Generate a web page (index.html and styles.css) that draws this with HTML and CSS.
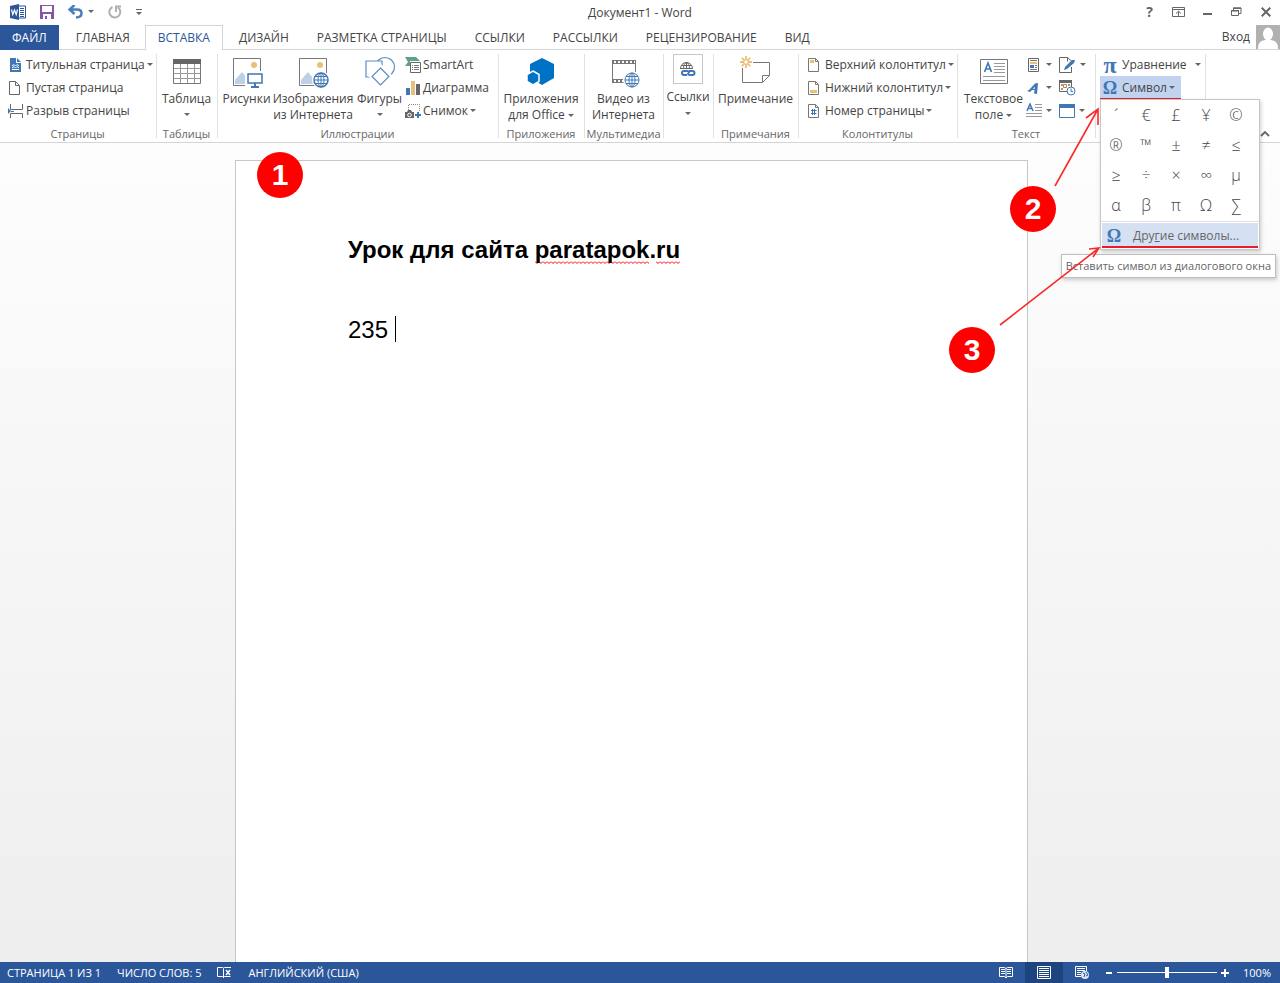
FILE: index.html
```html
<!DOCTYPE html>
<html lang="ru">
<head>
    <meta charset="UTF-8">
    <meta name="viewport" content="width=device-width, initial-scale=1.0">
    <title>Документ1 - Word</title>
    <link rel="stylesheet" href="styles.css">
</head>
<body>
    <!-- Title bar -->
    <header class="titlebar">
        <div class="quick-access">
            <button class="qa-btn" aria-label="Word">
                <svg width="16" height="16" viewBox="0 0 16 16"><path d="M8 2h7.500v12H8z" fill="#fff" stroke="#2b579a"/><path d="M10 4.500h4M10 6.500h4M10 8.500h4M10 10.500h4M10 12.500h4" stroke="#2b579a"/><path d="M0 2l9-2v16l-9-2z" fill="#2b579a"/><path d="M1.500 5.500l1.300 5L4.500 6l1.700 4.500 1.300-5" fill="none" stroke="#fff" stroke-width="1.200"/></svg>
            </button>
            <button class="qa-btn" aria-label="Сохранить">
                <svg width="14" height="14" viewBox="0 0 14 14"><path d="M0 0h14v14H0z" fill="#8653a8"/><path d="M2 1h10v6H2zM3 9h8v5H3z" fill="#fff"/><path d="M5 11h2v3H5z" fill="#8653a8"/></svg>
            </button>
            <button class="qa-btn qa-undo" aria-label="Отменить">
                <svg width="16" height="14" viewBox="0 0 16 14"><path d="M6.500 0L1.500 4.500l5 4.500M2 4.500H9c3 0 4.500 1.500 4.500 3.800S12 12.500 8 12.500" fill="none" stroke="#4a7ebb" stroke-width="2.500"/></svg>
                <span class="caret-down"></span>
            </button>
            <button class="qa-btn" aria-label="Повторить">
                <svg width="14" height="14" viewBox="0 0 14 14"><path d="M4.500 2A5.500 5.500 0 1 0 10 2.500" fill="none" stroke="#b0b0b0" stroke-width="2"/><path d="M8 7V1.500h5" fill="none" stroke="#b0b0b0" stroke-width="2"/></svg>
            </button>
            <button class="qa-btn" aria-label="Настройка панели">
                <svg width="6" height="6" viewBox="0 0 6 6"><path d="M0 0h6v1H0zM0 3h6L3 6z" fill="#666"/></svg>
            </button>
        </div>
        <div class="window-title">Документ1 - Word</div>
        <div class="window-buttons">
            <button aria-label="Справка" class="help-btn">?</button>
            <button aria-label="Параметры ленты"><svg width="13" height="10" viewBox="0 0 13 10"><path d="M.5.500h12v9H.5zM1 2.500h11" fill="none" stroke="#666"/><path d="M6.500 9V4.500M4 6.500l2.500-2.300L9 6.500" fill="none" stroke="#666"/></svg></button>
            <button aria-label="Свернуть"><svg width="10" height="10" viewBox="0 0 10 10"><path d="M0 6h9v2H0z" fill="#666"/></svg></button>
            <button aria-label="Восстановить"><svg width="11" height="10" viewBox="0 0 11 10"><path d="M.5 3.500h7v5h-7zM2.500 3V1h7.500v5.500H8" fill="none" stroke="#666"/><path d="M0 3h8v1.500H0zM2 .5h8V2H2z" fill="#666"/></svg></button>
            <button aria-label="Закрыть"><svg width="10" height="10" viewBox="0 0 10 10"><path d="M.7.700l8.600 8.600M9.300.700L.7 9.300" stroke="#666" stroke-width="2"/></svg></button>
        </div>
    </header>

    <!-- Tabs -->
    <nav class="tabs">
        <button class="tab tab-file">ФАЙЛ</button>
        <button class="tab">ГЛАВНАЯ</button>
        <button class="tab tab-active">ВСТАВКА</button>
        <button class="tab">ДИЗАЙН</button>
        <button class="tab">РАЗМЕТКА СТРАНИЦЫ</button>
        <button class="tab">ССЫЛКИ</button>
        <button class="tab">РАССЫЛКИ</button>
        <button class="tab">РЕЦЕНЗИРОВАНИЕ</button>
        <button class="tab">ВИД</button>
        <a class="sign-in" href="#">Вход
            <svg width="24" height="24" viewBox="0 0 24 24"><path d="M0 0h24v24H0z" fill="#b1b1b1"/><ellipse cx="12" cy="9" rx="5" ry="6.500" fill="#fff"/><path d="M2 24c0-6 2-8 7-9h6c5 1 7 3 7 9z" fill="#fff"/></svg>
        </a>
    </nav>

    <!-- Ribbon -->
    <div class="ribbon">
        <section class="group group-pages">
            <div class="group-body">
                <div class="rows">
                    <button class="row-btn">
                        <svg width="16" height="16" viewBox="0 0 16 16"><path d="M2 1h6v5h5v9H2z" fill="#3f78b5"/><path d="M9 1l4 4H9z" fill="#3f78b5"/><path d="M4 9l2-1.500 1.500 1.500L9 7.500 11 9M4 11l2-1.500 1.500 1.500L9 9.500l2 1.500M4 12.500h7" fill="none" stroke="#fff"/></svg>
                        Титульная страница<span class="caret-down"></span>
                    </button>
                    <button class="row-btn">
                        <svg width="16" height="16" viewBox="0 0 16 16"><path d="M1.500 1.500h6l4 4v9h-10zM7.500 1.500v4h4" fill="#fff" stroke="#666"/></svg>
                        Пустая страница
                    </button>
                    <button class="row-btn">
                        <svg width="16" height="16" viewBox="0 0 16 16"><path d="M2.500 1v5.500h12V1M2.500 15v-4.500h12V15" fill="none" stroke="#666"/><path d="M0 5l3 3-3 3z" fill="#3f78b5"/><path d="M3 8.500h3" stroke="#3f78b5"/></svg>
                        Разрыв страницы
                    </button>
                </div>
            </div>
            <h2 class="group-name">Страницы</h2>
        </section>

        <section class="group group-tables">
            <div class="group-body">
                <button class="big-btn">
                    <svg width="32" height="32" viewBox="0 0 32 32"><path d="M2.500 3.500h27v24h-27z" fill="#fff" stroke="#777"/><path d="M2 3h28v5H2z" fill="#666"/><path d="M3 12.500h26M3 17.500h26M3 22.500h26M9.500 8v19M16.500 8v19M23.500 8v19" stroke="#999"/></svg>
                    <span>Таблица</span><span class="caret-line"><i class="caret-down"></i></span>
                </button>
            </div>
            <h2 class="group-name">Таблицы</h2>
        </section>

        <section class="group group-art">
            <div class="group-body">
                <button class="big-btn btn-pictures">
                    <svg width="32" height="32" viewBox="0 0 32 32"><path d="M2.500 2.500h27v27h-27z" fill="#fff" stroke="#777"/><circle cx="23" cy="9" r="3" fill="#eac079"/><path d="M4 28V24l7-8 5 6v6z" fill="#bdd0e5"/><path d="M14 15h18v17H14z" fill="#fff"/><path d="M17 18h14v9H17z" fill="#fff" stroke="#3f78b5" stroke-width="1.500"/><path d="M24 27v3M20 31h8" stroke="#3f78b5" stroke-width="2"/></svg>
                    <span>Рисунки</span>
                </button>
                <button class="big-btn btn-online">
                    <svg width="32" height="32" viewBox="0 0 32 32"><path d="M2.500 2.500h27v27h-27z" fill="#fff" stroke="#777"/><circle cx="23" cy="9" r="3" fill="#eac079"/><path d="M4 28V24l7-8 5 6v6z" fill="#bdd0e5"/><circle cx="24" cy="24" r="9" fill="#fff"/><g fill="none" stroke="#3f78b5"><circle cx="24" cy="24" r="7" stroke-width="1.500"/><ellipse cx="24" cy="24" rx="3" ry="7"/><path d="M17 24h14M18 20.500h12M18 27.500h12M24 17v14"/></g></svg>
                    <span>Изображения<br>из Интернета</span>
                </button>
                <button class="big-btn btn-shapes">
                    <svg width="32" height="32" viewBox="0 0 32 32"><g fill="#fff" stroke="#5b8cc4" stroke-width="1.200"><circle cx="21" cy="11" r="9.500"/><path d="M2 5h16v16H2z"/><path d="M16.500 10.500l9.500 9.500-9.500 9.500L7 20z" stroke="#fff" stroke-width="4"/><path d="M16.500 12l8.500 8.500-8.500 8.500L8 20.500z"/></g></svg>
                    <span>Фигуры</span><span class="caret-line"><i class="caret-down"></i></span>
                </button>
                <div class="rows">
                    <button class="row-btn">
                        <svg width="16" height="16" viewBox="0 0 16 16"><path d="M0 0h11l4 4H5v5H0l3-4z" fill="#5fa088"/><path d="M5.500 5.500h10v10h-10z" fill="#fff" stroke="#666"/><path d="M7 8.500h1M9 8.500h5M7 10.500h1M9 10.500h5M7 12.500h1M9 12.500h5" stroke="#777"/></svg>
                        SmartArt
                    </button>
                    <button class="row-btn">
                        <svg width="16" height="16" viewBox="0 0 16 16"><path d="M1 8h4v7H1z" fill="#3f78b5"/><path d="M6 1h4v14H6z" fill="#eac079"/><path d="M11 4h4v11h-4z" fill="#666"/></svg>
                        Диаграмма
                    </button>
                    <button class="row-btn">
                        <svg width="16" height="16" viewBox="0 0 16 16"><path d="M3.500 7V1.500h11V9" fill="none" stroke="#888" stroke-dasharray="1 1"/><path d="M0 9h2l1-2h3l1 2h2v6H0z" fill="#666"/><circle cx="4.500" cy="12" r="1.800" fill="none" stroke="#fff"/><path d="M13 9v6M10 12h6" stroke="#3f78b5" stroke-width="2"/></svg>
                        Снимок<span class="caret-down"></span>
                    </button>
                </div>
            </div>
            <h2 class="group-name">Иллюстрации</h2>
        </section>

        <section class="group group-apps">
            <div class="group-body">
                <button class="big-btn">
                    <svg width="32" height="32" viewBox="0 0 32 32"><path d="M17 2l12 6v14l-12 7-12-7V8z" fill="#0072c6"/><path d="M8 15l6 3.500v7L8 29l-6-3.500v-7z" fill="#0072c6" stroke="#fff" stroke-width="1.500"/></svg>
                    <span>Приложения<br>для Office<i class="caret-down"></i></span>
                </button>
            </div>
            <h2 class="group-name">Приложения</h2>
        </section>

        <section class="group group-media">
            <div class="group-body">
                <button class="big-btn">
                    <svg width="32" height="32" viewBox="0 0 32 32"><path d="M4.500 4.500h23v22h-23z" fill="#fff" stroke="#777"/><path d="M4 4h24v4H4zM4 23h24v4H4z" fill="#777"/><path d="M6 6h21M6 25h21" stroke="#fff" stroke-width="2" stroke-dasharray="2 2"/><circle cx="24" cy="24" r="9" fill="#fff"/><g fill="none" stroke="#3f78b5"><circle cx="24" cy="24" r="7"/><ellipse cx="24" cy="24" rx="3" ry="7"/><path d="M17 24h14M18 20.500h12M18 27.500h12M24 17v14"/></g></svg>
                    <span>Видео из<br>Интернета</span>
                </button>
            </div>
            <h2 class="group-name">Мультимедиа</h2>
        </section>

        <section class="group group-links">
            <div class="group-body">
                <button class="big-btn btn-collapsed">
                    <span class="icon-frame"><svg width="18" height="18" viewBox="0 0 18 18"><g fill="none" stroke="#666"><path d="M1.500 8.500a6 6 0 0 1 12 0M7.500 2v7M3 5.500h9M1 8.500h13"/><path d="M4.500 9c0-4 1-6 3-6.500 2 .5 3 2.500 3 6.500"/></g><rect x="1" y="9" width="16" height="8" rx="4" fill="#fff"/><g fill="none" stroke="#3f78b5" stroke-width="2"><path d="M8 15H5a2 2 0 0 1 0-4h3a2 2 0 0 1 2 2M10 11h3.500a2 2 0 0 1 0 4H11a2 2 0 0 1-2-2"/></g></svg></span>
                    <span>Ссылки</span><span class="caret-line"><i class="caret-down"></i></span>
                </button>
            </div>
        </section>

        <section class="group group-comments">
            <div class="group-body">
                <button class="big-btn">
                    <svg width="32" height="32" viewBox="0 0 32 32"><path d="M3.500 12v14.500h20l7-7V6.500H14M23.500 26.500v-7h7" fill="none" stroke="#777"/><path d="M7 0v12M1 6h12M2.800 1.800l8.400 8.400M11.200 1.800l-8.400 8.400" stroke="#eac079" stroke-width="1.800"/><circle cx="7" cy="6" r="2.200" fill="#fff" stroke="#eac079"/></svg>
                    <span>Примечание</span>
                </button>
            </div>
            <h2 class="group-name">Примечания</h2>
        </section>

        <section class="group group-headers">
            <div class="group-body">
                <div class="rows">
                    <button class="row-btn">
                        <svg width="16" height="16" viewBox="0 0 16 16"><path d="M1.500 1.500h7l3 3v10h-10zM8.500 1.500v3h3" fill="#fff" stroke="#777"/><path d="M3 3h4v3H3z" fill="#eac079"/></svg>
                        Верхний колонтитул<span class="caret-down"></span>
                    </button>
                    <button class="row-btn">
                        <svg width="16" height="16" viewBox="0 0 16 16"><path d="M1.500 1.500h7l3 3v10h-10zM8.500 1.500v3h3" fill="#fff" stroke="#777"/><path d="M3 10h7v3H3z" fill="#eac079"/></svg>
                        Нижний колонтитул<span class="caret-down"></span>
                    </button>
                    <button class="row-btn">
                        <svg width="16" height="16" viewBox="0 0 16 16"><path d="M1.500 1.500h7l3 3v10h-10zM8.500 1.500v3h3" fill="#fff" stroke="#777"/><path d="M5.500 6v6M7.500 6v6M4 7.500h5.500M4 10.500h5.500" stroke="#3f78b5"/></svg>
                        Номер страницы<span class="caret-down"></span>
                    </button>
                </div>
            </div>
            <h2 class="group-name">Колонтитулы</h2>
        </section>

        <section class="group group-text">
            <div class="group-body">
                <button class="big-btn">
                    <svg width="32" height="32" viewBox="0 0 32 32"><path d="M2.500 3.500h27v24h-27z" fill="#fff" stroke="#777"/><path d="M6.500 16l3.500-9 3.500 9M8 13h4.500" fill="none" stroke="#3f78b5" stroke-width="1.600"/><path d="M16 7.500h11M16 10.500h11M16 13.500h11M16 16.500h11M5 20.500h22M5 24.500h22" stroke="#999"/></svg>
                    <span>Текстовое<br>поле<i class="caret-down"></i></span>
                </button>
                <div class="icon-grid">
                    <button aria-label="Экспресс-блоки"><svg width="16" height="16" viewBox="0 0 16 16"><path d="M2.500 1.500h10v13h-10z" fill="#fff" stroke="#666"/><path d="M4 3.500h7M4 12.500h7M9 8.500h2M9 10.500h2" stroke="#777"/><path d="M4 5h7v2H4z" fill="#eac079"/><path d="M4 8h4v3H4z" fill="#3f78b5"/></svg><i class="caret-down"></i></button>
                    <button aria-label="Строка подписи"><svg width="17" height="16" viewBox="0 0 17 16"><path d="M12.500 10v5.500H.5V.5h8l4 3.500M8.500.5v4" fill="none" stroke="#666"/><path d="M16 3l-1 3-7 6-3 1 1-3 7-7z" fill="#3f78b5"/></svg><i class="caret-down"></i></button>
                    <button aria-label="WordArt"><svg width="16" height="16" viewBox="0 0 16 16"><path d="M1 11l2-1 6-6.500L12 3l-1 11-3-.5.500-3.500H6l-2 2zM9 6.500L7 9h1.700z" fill="#3f78b5" fill-rule="evenodd"/></svg><i class="caret-down"></i></button>
                    <button aria-label="Дата и время"><svg width="17" height="17" viewBox="0 0 17 17"><path d="M.5 1.500h12v11H.5z" fill="#fff" stroke="#666"/><path d="M0 1h13v3H0z" fill="#666"/><path d="M2 5h2v2H2zM9 5h2v2H9zM2 9h2v2H2z" fill="#999"/><path d="M4.500 5.500h3v3h-3z" fill="#fff" stroke="#d47a2a"/><circle cx="12" cy="12" r="4" fill="#fff" stroke="#3f78b5"/><path d="M12 9.500v3h2" fill="none" stroke="#3f78b5"/></svg></button>
                    <button aria-label="Буквица"><svg width="16" height="16" viewBox="0 0 16 16"><path d="M1 8l3-7 3 7M2 5.500h4" fill="none" stroke="#3f78b5" stroke-width="1.500"/><path d="M9 1.500h7M9 4.500h7M9 7.500h7M0 10.500h16M0 13.500h16" stroke="#999"/></svg><i class="caret-down"></i></button>
                    <button aria-label="Объект"><svg width="16" height="16" viewBox="0 0 16 16"><path d="M.5 1.500h15v13H.5z" fill="#fff" stroke="#3f78b5"/><path d="M0 1h16v4H0z" fill="#3f78b5"/></svg><i class="caret-down"></i></button>
                </div>
            </div>
            <h2 class="group-name">Текст</h2>
        </section>

        <section class="group group-symbols">
            <div class="group-body">
                <div class="rows">
                    <button class="row-btn row-equation"><span class="glyph glyph-pi">π</span>Уравнение<span class="caret-down"></span></button>
                    <div class="symbol-wrap">
                        <button class="row-btn row-symbol"><span class="glyph">Ω</span>Символ<span class="caret-down"></span></button>
                        <div class="symbol-menu">
                            <div class="symbol-grid">
                                <button>ˊ</button><button>€</button><button>£</button><button>¥</button><button>©</button>
                                <button>®</button><button>™</button><button>±</button><button>≠</button><button>≤</button>
                                <button>≥</button><button>÷</button><button>×</button><button>∞</button><button>µ</button>
                                <button>α</button><button>β</button><button>π</button><button>Ω</button><button>∑</button>
                            </div>
                            <button class="more-symbols"><span class="glyph">Ω</span><span>Дру<u>г</u>ие символы...</span></button>
                            <div class="tooltip">Вставить символ из диалогового окна</div>
                        </div>
                    </div>
                </div>
            </div>
        </section>

        <button class="collapse-btn" aria-label="Свернуть ленту"><svg width="10" height="6" viewBox="0 0 10 6"><path d="M1 5l4-4 4 4" fill="none" stroke="#666" stroke-width="1.800"/></svg></button>
    </div>

    <!-- Document -->
    <main class="workspace">
        <article class="page">
            <h1>Урок для сайта <span class="misspelled">paratapok</span>.<span class="misspelled">ru</span></h1>
            <p>235 <span class="text-cursor"></span></p>
        </article>
    </main>

    <!-- Status bar -->
    <footer class="statusbar">
        <span class="status-page">СТРАНИЦА 1 ИЗ 1</span>
        <span class="status-words">ЧИСЛО СЛОВ: 5</span>
        <button class="status-proof" aria-label="Правописание"><svg width="15" height="13" viewBox="0 0 15 13"><path d="M6.500 2.500V12M6.500 2l-1-.5h-5v9h5l1 1 1-1h6M6.500 2l1-.5h3" fill="none" stroke="#fff"/><path d="M9 4l4 5M13 4L9 9" stroke="#fff" stroke-width="1.500"/><path d="M8 1.500h6" stroke="#fff"/></svg></button>
        <span>АНГЛИЙСКИЙ (США)</span>
        <div class="views">
            <button aria-label="Режим чтения"><svg width="14" height="13" viewBox="0 0 14 13"><path d="M.5 1.500h5l1.500 1 1.500-1h5v9h-5L7 12l-1.500-1.500h-5zM7 2v10" fill="none" stroke="#fff"/><path d="M2 3.500h4M2 5.500h4M2 7.500h4M8 3.500h4M8 5.500h4M8 7.500h4" stroke="#fff"/></svg></button>
            <button class="view-active" aria-label="Разметка страницы"><svg width="14" height="13" viewBox="0 0 14 13"><path d="M.5.500h13v12H.5z" fill="none" stroke="#fff"/><path d="M2 2.500h10M2 4.500h10M2 6.500h10M2 8.500h10M2 10.500h10" stroke="#fff"/></svg></button>
            <button aria-label="Веб-документ"><svg width="14" height="13" viewBox="0 0 14 13"><path d="M6 10.500H.5v-10h11V5" fill="none" stroke="#fff"/><path d="M2 2.500h8M2 4.500h8M2 6.500h4M2 8.500h4" stroke="#fff"/><circle cx="10" cy="9" r="4" fill="#dce6f3"/><path d="M8 7l2 1-1 3M11 6l2 3-2 1" fill="none" stroke="#2b579a"/></svg></button>
        </div>
        <div class="zoom">
            <button aria-label="Уменьшить"><svg width="8" height="8" viewBox="0 0 8 8"><path d="M1 3h6v2H1z" fill="#fff"/></svg></button>
            <input type="range" min="0" max="100" value="50" aria-label="Масштаб">
            <button aria-label="Увеличить"><svg width="8" height="8" viewBox="0 0 8 8"><path d="M0 3h8v2H0zM3 0h2v8H3z" fill="#fff"/></svg></button>
            <span class="zoom-value">100%</span>
        </div>
    </footer>

    <!-- Lesson marks drawn over the window -->
    <div class="marks">
        <svg class="mark-arrows" width="1280" height="400" viewBox="0 0 1280 400"><g fill="none" stroke="#fa2a2a" stroke-width="1.600"><path d="M1055 186l43-77M1086 118l12-9 0 16"/><path d="M1000 325l99-77M1089 249l10-1-6 9"/></g></svg>
        <span class="mark mark-1">1</span>
        <span class="mark mark-2">2</span>
        <span class="mark mark-3">3</span>
    </div>
</body>
</html>
```
FILE: styles.css
```css
* {
    box-sizing: border-box;
}

html, body {
    margin: 0;
    padding: 0;
    height: 100vh;
}

body {
    display: flex;
    flex-direction: column;
    position: relative;
    overflow: hidden;
    background: #fff;
    color: #444;
    font-family: "Open Sans", "Noto Sans", sans-serif;
    font-size: 12px;
    line-height: 16px;
}

button {
    display: flex;
    align-items: center;
    margin: 0;
    padding: 0;
    border: none;
    background: none;
    color: inherit;
    font: inherit;
    white-space: nowrap;
}

svg {
    display: block;
    flex: none;
}

.caret-down {
    display: inline-block;
    flex: none;
    border: 3px solid transparent;
    border-top-color: #666;
    border-bottom: 0;
    margin-left: 3px;
    vertical-align: middle;
}

/* Title bar */
.titlebar {
    display: grid;
    grid-template-columns: 1fr auto 1fr;
    height: 25px;
}

.quick-access {
    display: flex;
    padding: 0 0 3px 10px;
    gap: 14px;
}

.qa-undo .caret-down {
    margin-left: 4px;
}

.window-title {
    line-height: 26px;
}

.window-buttons {
    display: flex;
    justify-content: flex-end;
    padding-bottom: 3px;
}

.window-buttons button {
    width: 29px;
    justify-content: center;
}

.window-buttons .help-btn {
    font-size: 14px;
    font-weight: bold;
    color: #666;
}

/* Tabs */
.tabs {
    display: flex;
    height: 25px;
    border-bottom: 1px solid #d5d5d5;
}

.tab {
    height: 25px;
    padding: 0 14px;
}

.tab-file {
    padding: 0 12px;
    margin-right: 3px;
    background: #2b579a;
    color: #fff;
}

.tab-active {
    padding: 0 12px;
    margin: 0 2px 0 1px;
    border: 1px solid #d5d5d5;
    border-bottom: none;
    background: #fff;
    color: #2b579a;
}

.sign-in {
    display: flex;
    align-items: center;
    gap: 6px;
    margin-left: auto;
    color: #444;
    text-decoration: none;
}

/* Ribbon */
.ribbon {
    display: flex;
    position: relative;
    height: 93px;
    padding-top: 3px;
    border-bottom: 1px solid #d5d5d5;
}

.group {
    display: flex;
    flex-direction: column;
    flex: none;
    padding-right: 2px;
    background: linear-gradient(#e1e1e1, #e1e1e1) right 1px / 1px 84px no-repeat;
}

.group-body {
    display: flex;
    justify-content: center;
    height: 69px;
}

.group-name {
    margin: 0;
    padding-top: 4px;
    font-size: 11px;
    font-weight: normal;
    text-align: center;
    color: #666;
    white-space: nowrap;
}

.group-pages { width: 157px; }
.group-tables { width: 61px; }
.group-art { width: 281px; }
.group-apps { width: 86px; }
.group-media { width: 79px; }
.group-links { width: 50px; }
.group-comments { width: 85px; }
.group-headers { width: 159px; }
.group-text { width: 138px; }
.group-symbols { width: 110px; }

.group-pages .group-body,
.group-art .group-body,
.group-headers .group-body,
.group-text .group-body,
.group-symbols .group-body {
    justify-content: flex-start;
}

.group-pages .group-body { padding-left: 8px; }
.group-art .group-body { padding-left: 3px; }
.group-headers .group-body { padding-left: 8px; }
.group-text .group-body { padding-left: 3px; }
.group-symbols .group-body { padding-left: 4px; }

.row-btn {
    height: 23px;
    gap: 2px;
}

.row-btn .caret-down {
    margin-left: 0;
}

.big-btn {
    flex-direction: column;
    padding-top: 3px;
    line-height: 16px;
}

.big-btn svg {
    margin-bottom: 3px;
}

.caret-line {
    display: flex;
    height: 16px;
    align-items: center;
}

.caret-line .caret-down {
    margin-left: 0;
}

.btn-pictures { width: 51px; }
.btn-online { width: 82px; }
.btn-shapes { width: 51px; }

.btn-collapsed {
    padding-top: 1px;
}

.icon-frame {
    display: flex;
    align-items: center;
    justify-content: center;
    width: 30px;
    height: 30px;
    margin-bottom: 5px;
    border: 1px solid #c6c6c6;
}

.btn-collapsed .icon-frame svg {
    margin: 0;
}

.group-text .big-btn {
    width: 65px;
}

.icon-grid {
    display: grid;
    grid-template-columns: 33px 33px;
    grid-auto-rows: 23px;
}

.icon-grid .caret-down {
    margin-left: 4px;
}

.glyph {
    width: 20px;
    color: #3f78b5;
    font-family: "Liberation Serif", serif;
    font-size: 18px;
    font-weight: bold;
    text-align: center;
}

.glyph-pi {
    font-size: 24px;
}

.row-equation .caret-down {
    margin-left: 6px;
}

.symbol-wrap {
    position: relative;
}

/* the underline is a shadow so that the label stays centred */
.row-symbol {
    width: 81px;
    background: #c2d3f0;
    box-shadow: inset 0 -1px #e81c2c, 0 1px #e81c2c;
}

.symbol-menu {
    position: absolute;
    top: 23px;
    left: 0;
    z-index: 2;
    width: 160px;
    border: 1px solid #c6c6c6;
    background: #fff;
    box-shadow: 1px 2px 4px rgba(0, 0, 0, 0.2);
}

.symbol-grid {
    display: grid;
    grid-template-columns: repeat(5, 30px);
    grid-auto-rows: 30px;
    padding-bottom: 1px;
    border-bottom: 1px solid #e1e1e1;
}

.symbol-grid button {
    justify-content: center;
    font-size: 16px;
    font-weight: 300;
}

.more-symbols {
    width: 156px;
    height: 25px;
    margin: 1px;
    padding-left: 2px;
    gap: 9px;
    background: #d5e1f2;
    box-shadow: inset 0 -2px #e81c2c;
    color: #666;
}

.tooltip {
    position: absolute;
    top: 154px;
    right: -17px;
    padding: 3px 4px;
    border: 1px solid #bebebe;
    background: #fff;
    box-shadow: 1px 2px 4px rgba(0, 0, 0, 0.2);
    color: #666;
    font-size: 11px;
    white-space: nowrap;
}

.collapse-btn {
    align-self: flex-end;
    margin: 0 10px 5px auto;
}

/* Document */
.workspace {
    flex: 1;
    display: flex;
    justify-content: center;
    min-height: 0;
    padding: 17px 17px 0 0;
    background: linear-gradient(#fdfdfd, #eee);
}

.page {
    width: 793px;
    padding: 75px 112px 0;
    border: 1px solid #c6c6c6;
    border-bottom: none;
    background: #fff;
    color: #000;
    font-family: "Liberation Sans", Arial, sans-serif;
    font-size: 24px;
    line-height: 28px;
}

.page h1 {
    margin: 0 0 52px;
    font-size: 24px;
}

.page p {
    display: flex;
    margin: 0;
    white-space: pre;
}

.misspelled {
    padding-bottom: 1px;
    background: url("data:image/svg+xml,%3Csvg xmlns='http://www.w3.org/2000/svg' width='4' height='3'%3E%3Cpath d='M0 .5l2 2 2-2' fill='none' stroke='red'/%3E%3C/svg%3E") left bottom repeat-x;
}

.text-cursor {
    width: 1px;
    height: 26px;
    background: #000;
}

/* Status bar */
.statusbar {
    display: flex;
    align-items: center;
    height: 21px;
    padding: 0 9px 0 7px;
    background: #2b579a;
    color: #fff;
    font-size: 11px;
}

.status-page {
    margin-right: 16px;
}

.status-proof {
    margin: 0 16px;
}

.views {
    display: flex;
    margin-left: auto;
}

.views button {
    width: 38px;
    height: 21px;
    justify-content: center;
}

.views .view-active {
    background: #1e4480;
}

.zoom {
    display: flex;
    align-items: center;
    margin-left: 4px;
}

.zoom input {
    width: 100px;
    height: 12px;
    margin: 0 4px;
    appearance: none;
    background: linear-gradient(#fff, #fff) center / 100% 1px no-repeat;
}

.zoom input::-webkit-slider-thumb {
    appearance: none;
    width: 4px;
    height: 11px;
    background: #fff;
}

.zoom-value {
    width: 42px;
    text-align: right;
}

/* Lesson marks */
.marks {
    position: absolute;
    top: 0;
    left: 0;
    z-index: 5;
    pointer-events: none;
}

.mark {
    position: absolute;
    width: 46px;
    height: 46px;
    border-radius: 50%;
    background: #f00;
    color: #fff;
    font-family: "Liberation Sans", Arial, sans-serif;
    font-size: 30px;
    font-weight: bold;
    line-height: 46px;
    text-align: center;
}

.mark-1 { left: 257px; top: 152px; }
.mark-2 { left: 1010px; top: 186px; }
.mark-3 { left: 949px; top: 327px; }
```
